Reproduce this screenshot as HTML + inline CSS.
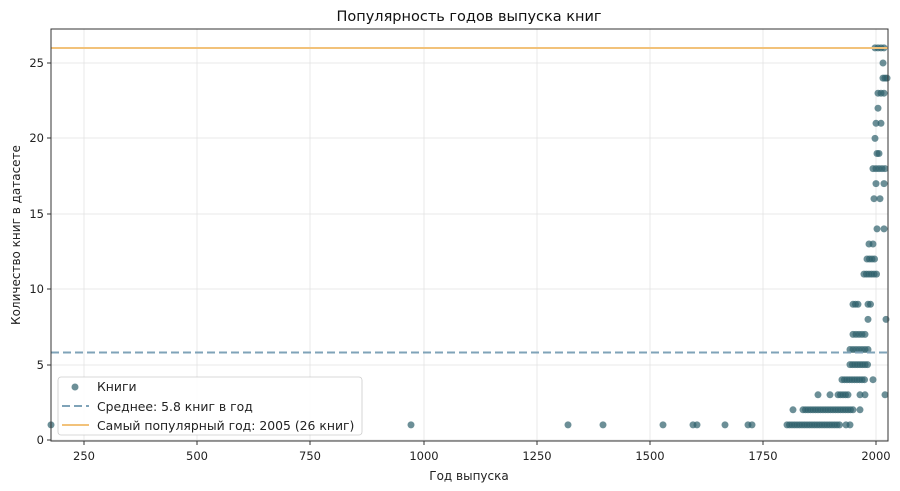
<!DOCTYPE html>
<html><head><meta charset="utf-8"><style>
body{margin:0;background:#fff}
svg{display:block;font-family:"DejaVu Sans","Liberation Sans",sans-serif}
</style></head><body>
<svg id="s" width="900" height="491" viewBox="0 0 900 491" xmlns="http://www.w3.org/2000/svg">
<rect width="900" height="491" fill="#fff"/>
<g stroke="#e3e3e3" stroke-width="0.8">
<line x1="84" y1="29" x2="84" y2="441"/><line x1="197" y1="29" x2="197" y2="441"/><line x1="310" y1="29" x2="310" y2="441"/><line x1="424" y1="29" x2="424" y2="441"/><line x1="537" y1="29" x2="537" y2="441"/><line x1="650" y1="29" x2="650" y2="441"/><line x1="763" y1="29" x2="763" y2="441"/><line x1="876" y1="29" x2="876" y2="441"/>
<line x1="51" y1="440" x2="888" y2="440"/><line x1="51" y1="365" x2="888" y2="365"/><line x1="51" y1="289" x2="888" y2="289"/><line x1="51" y1="214" x2="888" y2="214"/><line x1="51" y1="138" x2="888" y2="138"/><line x1="51" y1="63" x2="888" y2="63"/>
</g>
<g id="pts" fill="#2e5f6b" fill-opacity="0.7"></g>
<line x1="51" y1="352.5" x2="888" y2="352.5" stroke="#7fa3b8" stroke-width="2" stroke-dasharray="8,4"/>
<line x1="51" y1="48" x2="888" y2="48" stroke="#f2c27a" stroke-width="2"/>
<rect x="51" y="29" width="837" height="412" fill="none" stroke="#333" stroke-width="1"/>
<g stroke="#333" stroke-width="1">
<line x1="84" y1="441" x2="84" y2="445"/><line x1="197" y1="441" x2="197" y2="445"/><line x1="310" y1="441" x2="310" y2="445"/><line x1="424" y1="441" x2="424" y2="445"/><line x1="537" y1="441" x2="537" y2="445"/><line x1="650" y1="441" x2="650" y2="445"/><line x1="763" y1="441" x2="763" y2="445"/><line x1="876" y1="441" x2="876" y2="445"/>
<line x1="47" y1="440" x2="51" y2="440"/><line x1="47" y1="365" x2="51" y2="365"/><line x1="47" y1="289" x2="51" y2="289"/><line x1="47" y1="214" x2="51" y2="214"/><line x1="47" y1="138" x2="51" y2="138"/><line x1="47" y1="63" x2="51" y2="63"/>
</g>
<g font-size="11.5" fill="#222" text-anchor="middle">
<text x="84" y="460">250</text><text x="197" y="460">500</text><text x="310" y="460">750</text><text x="424" y="460">1000</text><text x="537" y="460">1250</text><text x="650" y="460">1500</text><text x="763" y="460">1750</text><text x="876" y="460">2000</text>
</g>
<g font-size="11.5" fill="#222" text-anchor="end">
<text x="44" y="444">0</text><text x="44" y="369">5</text><text x="44" y="293">10</text><text x="44" y="218">15</text><text x="44" y="142">20</text><text x="44" y="67">25</text>
</g>
<text x="469" y="480" font-size="12" text-anchor="middle" fill="#222">Год выпуска</text>
<text transform="translate(20,235) rotate(-90)" font-size="12" text-anchor="middle" fill="#222">Количество книг в датасете</text>
<text x="469" y="21" font-size="14.5" text-anchor="middle" fill="#111">Популярность годов выпуска книг</text>
<rect x="58" y="377" width="304" height="58" rx="3" fill="#fff" fill-opacity="0.85" stroke="#ccc" stroke-width="0.8"/>
<circle cx="75" cy="387" r="3.5" fill="#2e5f6b" fill-opacity="0.7"/>
<line x1="62" y1="406" x2="89" y2="406" stroke="#7fa3b8" stroke-width="2" stroke-dasharray="8,4"/>
<line x1="62" y1="425" x2="89" y2="425" stroke="#f2c27a" stroke-width="2"/>
<g font-size="12.4" fill="#222">
<text x="97" y="391">Книги</text><text x="97" y="411">Среднее: 5.8 книг в год</text><text x="97" y="430">Самый популярный год: 2005 (26 книг)</text>
</g>
</svg>
<script>
var g=document.getElementById('pts'),ns='http://www.w3.org/2000/svg';
function c(x,v){var e=document.createElementNS(ns,'circle');e.setAttribute('cx',x);e.setAttribute('cy',(440-15.08*v).toFixed(1));e.setAttribute('r',3.5);g.appendChild(e);}
function r(a,b,v,st){for(var x=a;x<=b;x+=st||2.5)c(x,v);}
[51,411,568,603,663,693,697,725,748,752].forEach(function(x){c(x,1)});
r(787,840,1);c(846,1);c(850,1);
c(793,2);r(803,855,2);c(860,2);
c(818,3);c(830,3);r(838,850,3);c(860,3);c(865,3);c(885,3);
r(842,866,4);c(873,4);
r(850,869,5);r(850,870,6,3);r(853,867,7,3);c(868,8);c(886,8);
r(853,860,9);r(868,872,9);r(864,877,11);r(867,875,12);c(869,13);c(873,13);
c(877,14);c(884,14);c(874,16);c(880,16);c(876,17);c(884,17);r(873,885,18,3);c(879,19);c(877,19);
c(875,20);c(876,21);c(881,21);c(878,22);r(878,884,23,3);r(883,887,24,2);c(883,25);r(875,884,26,3);
</script>
</body></html>
